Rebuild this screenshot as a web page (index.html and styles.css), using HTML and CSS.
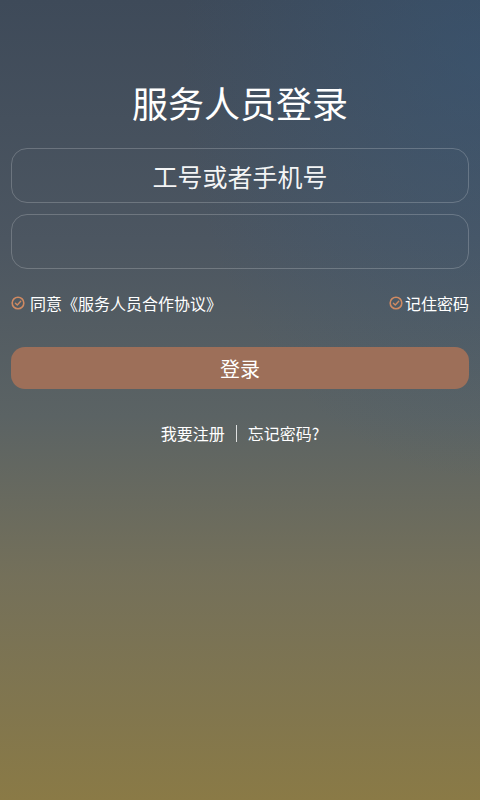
FILE: index.html
```html
<!DOCTYPE html>
<html lang="zh-CN">
<head>
    <meta charset="UTF-8">
    <meta name="viewport" content="width=device-width, initial-scale=1.0">
    <title>服务人员登录</title>
    <link rel="stylesheet" href="styles.css">
</head>
<body>
    <div class="page">
        <h1 class="title">服务人员登录</h1>
        <div class="field">
            <input type="text" placeholder="工号或者手机号">
        </div>
        <div class="field">
            <input type="password">
        </div>
        <div class="options">
            <label class="check">
                <svg class="tick" viewBox="0 0 14 14" width="14" height="14">
                    <circle cx="7" cy="7" r="5.8" fill="none" stroke="#d08a62" stroke-width="1.6"/>
                    <path d="M4.4 7.2 L6.3 9 L9.7 5.3" fill="none" stroke="#d08a62" stroke-width="1.4" stroke-linecap="round" stroke-linejoin="round"/>
                </svg>
                <span>同意《服务人员合作协议》</span>
            </label>
            <label class="check remember">
                <svg class="tick" viewBox="0 0 14 14" width="14" height="14">
                    <circle cx="7" cy="7" r="5.8" fill="none" stroke="#d08a62" stroke-width="1.6"/>
                    <path d="M4.4 7.2 L6.3 9 L9.7 5.3" fill="none" stroke="#d08a62" stroke-width="1.4" stroke-linecap="round" stroke-linejoin="round"/>
                </svg>
                <span>记住密码</span>
            </label>
        </div>
        <button class="login">登录</button>
        <div class="links">
            <a href="#">我要注册</a>
            <span class="sep"></span>
            <a href="#">忘记密码?</a>
        </div>
    </div>
</body>
</html>
```

FILE: styles.css
```css
html, body {
    margin: 0;
    height: 100%;
}

body {
    font-family: "Noto Sans CJK SC", "Noto Sans", sans-serif;
    color: white;
    background:
        radial-gradient(ellipse 300px 420px at 480px 60px, rgba(50, 90, 130, 0.4), rgba(50, 90, 130, 0)),
        linear-gradient(180deg, #3e4a59 0%, #4c5661 30%, #5b6364 52%, #74705a 72%, #8a7a46 100%);
}

.page {
    padding: 84px 11px 0;
}

.title {
    margin: 0 0 28px;
    font-size: 36px;
    line-height: 36px;
    font-weight: 400;
    text-align: center;
}

.field {
    height: 53px;
    border: 1.5px solid rgba(255, 255, 255, 0.2);
    border-radius: 16px;
    margin-bottom: 11px;
    display: flex;
}

.field input {
    flex: 1;
    background: transparent;
    border: none;
    outline: none;
    color: white;
    font-family: inherit;
    font-size: 25px;
    text-align: center;
}

.field input::placeholder {
    color: rgba(255, 255, 255, 0.95);
}

.options {
    display: flex;
    justify-content: space-between;
    align-items: center;
    margin-top: 24px;
    height: 20px;
    font-size: 16px;
}

.check {
    display: flex;
    align-items: center;
    gap: 5px;
}

.remember {
    gap: 2px;
}

.login {
    display: block;
    width: 100%;
    height: 42px;
    margin-top: 34px;
    border: none;
    border-radius: 14px;
    background-color: #9d6f59;
    color: white;
    font-family: inherit;
    font-size: 20px;
    cursor: pointer;
}

.links {
    display: flex;
    justify-content: center;
    align-items: center;
    gap: 11px;
    margin-top: 34px;
    font-size: 16px;
    line-height: 20px;
}

.links a {
    color: white;
    text-decoration: none;
}

.sep {
    width: 1px;
    height: 17px;
    background-color: rgba(255, 255, 255, 0.8);
}
```
